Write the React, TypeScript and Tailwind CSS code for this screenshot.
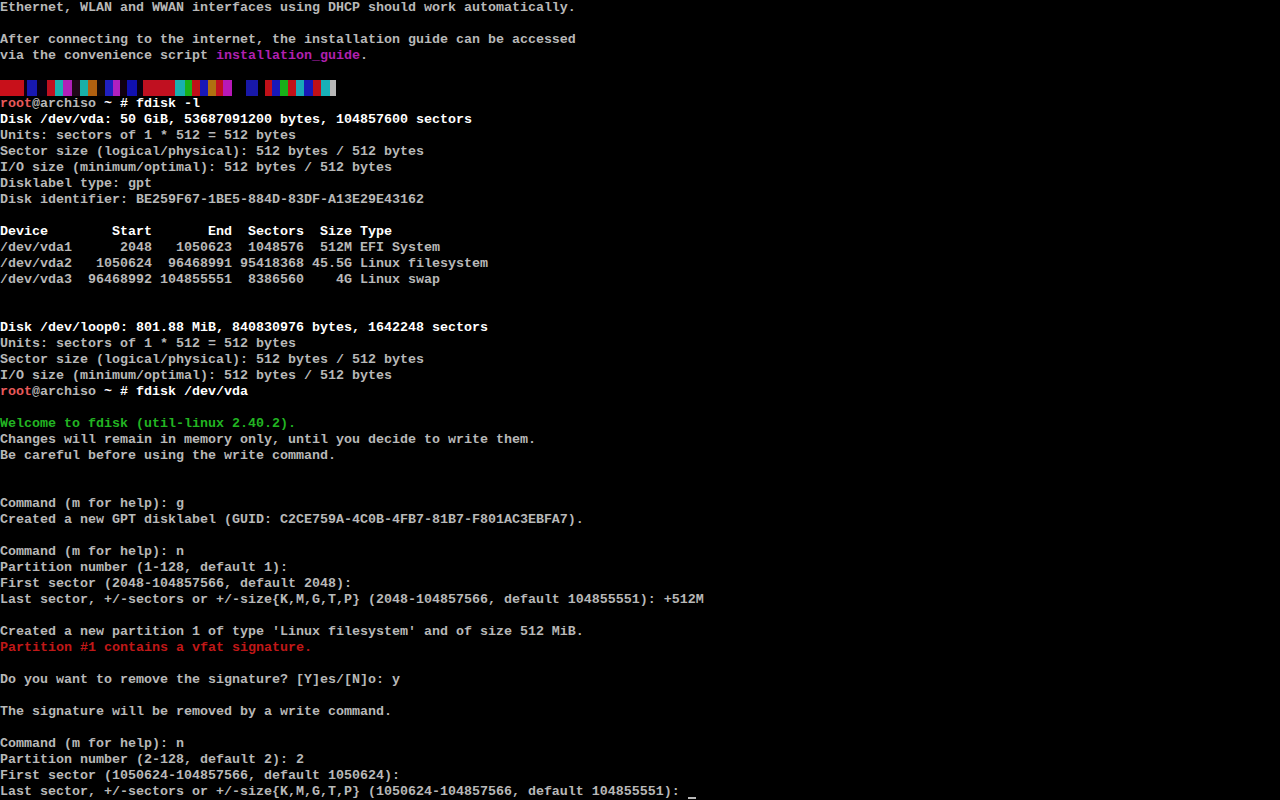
import React from "react";

type Seg = { t: string; c?: string };
type Line = Seg[] | "bar" | "cursor";

const N = "text-[#b8b8b8]";
const W = "text-[#ffffff]";
const R = "text-[#e85a5a]";
const DR = "text-[#c01818]";
const G = "text-[#22b422]";
const M = "text-[#b020b0]";

const p = (t: string): Seg[] => [{ t, c: N }];
const b = (t: string): Seg[] => [{ t, c: W }];
const prompt = (cmd: string): Seg[] => [
  { t: "root", c: R },
  { t: "@archiso ", c: N },
  { t: "~ # " + cmd, c: W },
];

const lines: Line[] = [
  p("Ethernet, WLAN and WWAN interfaces using DHCP should work automatically."),
  p(""),
  p("After connecting to the internet, the installation guide can be accessed"),
  [
    { t: "via the convenience script ", c: N },
    { t: "installation_guide", c: M },
    { t: ".", c: N },
  ],
  p(""),
  "bar",
  prompt("fdisk -l"),
  b("Disk /dev/vda: 50 GiB, 53687091200 bytes, 104857600 sectors"),
  p("Units: sectors of 1 * 512 = 512 bytes"),
  p("Sector size (logical/physical): 512 bytes / 512 bytes"),
  p("I/O size (minimum/optimal): 512 bytes / 512 bytes"),
  p("Disklabel type: gpt"),
  p("Disk identifier: BE259F67-1BE5-884D-83DF-A13E29E43162"),
  p(""),
  b("Device        Start       End  Sectors  Size Type"),
  p("/dev/vda1      2048   1050623  1048576  512M EFI System"),
  p("/dev/vda2   1050624  96468991 95418368 45.5G Linux filesystem"),
  p("/dev/vda3  96468992 104855551  8386560    4G Linux swap"),
  p(""),
  p(""),
  b("Disk /dev/loop0: 801.88 MiB, 840830976 bytes, 1642248 sectors"),
  p("Units: sectors of 1 * 512 = 512 bytes"),
  p("Sector size (logical/physical): 512 bytes / 512 bytes"),
  p("I/O size (minimum/optimal): 512 bytes / 512 bytes"),
  prompt("fdisk /dev/vda"),
  p(""),
  [{ t: "Welcome to fdisk (util-linux 2.40.2).", c: G }],
  p("Changes will remain in memory only, until you decide to write them."),
  p("Be careful before using the write command."),
  p(""),
  p(""),
  p("Command (m for help): g"),
  p("Created a new GPT disklabel (GUID: C2CE759A-4C0B-4FB7-81B7-F801AC3EBFA7)."),
  p(""),
  p("Command (m for help): n"),
  p("Partition number (1-128, default 1):"),
  p("First sector (2048-104857566, default 2048):"),
  p("Last sector, +/-sectors or +/-size{K,M,G,T,P} (2048-104857566, default 104855551): +512M"),
  p(""),
  p("Created a new partition 1 of type 'Linux filesystem' and of size 512 MiB."),
  [{ t: "Partition #1 contains a vfat signature.", c: DR }],
  p(""),
  p("Do you want to remove the signature? [Y]es/[N]o: y"),
  p(""),
  p("The signature will be removed by a write command."),
  p(""),
  p("Command (m for help): n"),
  p("Partition number (2-128, default 2): 2"),
  p("First sector (1050624-104857566, default 1050624):"),
  "cursor",
];

// color bar segments: [width px, color]
const bar: [number, string][] = [
  [24, "#c8101a"],
  [3, "#100010"],
  [10, "#1818b0"],
  [10, "#080010"],
  [8, "#c01020"],
  [8, "#18b0b0"],
  [9, "#b020b8"],
  [8, "#200818"],
  [8, "#18b0a8"],
  [9, "#b06010"],
  [8, "#100808"],
  [8, "#2020c0"],
  [7, "#b020c0"],
  [7, "#100010"],
  [10, "#1010b0"],
  [6, "#080010"],
  [32, "#c01020"],
  [10, "#18b0b0"],
  [7, "#18b018"],
  [8, "#c01018"],
  [8, "#1818b8"],
  [8, "#b07010"],
  [7, "#c01020"],
  [9, "#b818b8"],
  [14, "#000000"],
  [12, "#1818a8"],
  [7, "#000000"],
  [7, "#c01018"],
  [8, "#1818b8"],
  [8, "#18b018"],
  [8, "#c01018"],
  [8, "#18a8b8"],
  [9, "#1818b8"],
  [8, "#c01018"],
  [9, "#18b0b8"],
  [6, "#b8b8b8"],
];

export default function App() {
  return (
    <div
      className="w-[1280px] h-[800px] bg-black overflow-hidden font-bold text-[13.333px] leading-[16px]"
      style={{ fontFamily: '"Liberation Mono", "DejaVu Sans Mono", monospace' }}
    >
      {lines.map((ln, i) => {
        if (ln === "bar") {
          return (
            <div key={i} className="flex h-[16px]">
              {bar.map(([w, c], j) => (
                <div key={j} className="h-[16px] blur-[0.6px]" style={{ width: w, backgroundColor: c }} />
              ))}
            </div>
          );
        }
        if (ln === "cursor") {
          return (
            <div key={i} className="flex h-[16px] whitespace-pre">
              <span className={N}>
                {"Last sector, +/-sectors or +/-size{K,M,G,T,P} (1050624-104857566, default 104855551): "}
              </span>
              <span className="relative w-[8px] h-[16px]">
                <span className="absolute left-0 bottom-[1px] w-[8px] h-[2px] bg-[#b8b8b8]" />
              </span>
            </div>
          );
        }
        return (
          <div key={i} className="h-[16px] whitespace-pre">
            {ln.map((s, j) => (
              <span key={j} className={s.c}>
                {s.t}
              </span>
            ))}
          </div>
        );
      })}
    </div>
  );
}
